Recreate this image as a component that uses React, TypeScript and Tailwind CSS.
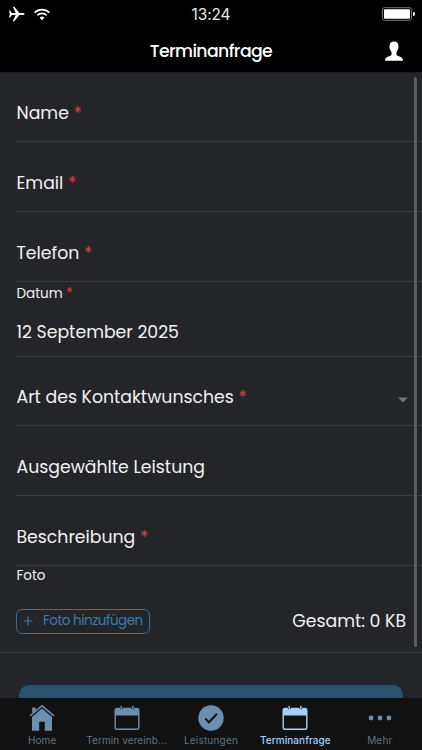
import type { ReactNode } from "react";

type FieldProps = {
  label: string;
  required?: boolean;
  className: string;
  children?: ReactNode;
};

function Required() {
  return <span className="text-[#d8434a]"> *</span>;
}

function Field({ label, required, className, children }: FieldProps) {
  return (
    <div className={`ml-4 flex shrink-0 items-end justify-between border-b border-[#3b3c40] pr-[14px] pb-[15px] pl-[0.5px] ${className}`}>
      <label className="text-[17.3px] leading-[26px] whitespace-pre">
        {label}
        {required && <Required />}
      </label>
      {children}
    </div>
  );
}

function CalendarIcon() {
  return (
    <svg width="26" height="26" viewBox="0 0 26 26" fill="none">
      <path
        d="M3 2.800h2.700a1.500 1.500 0 0 0 3 0h8.600a1.500 1.500 0 0 0 3 0H23a2.500 2.500 0 0 1 2.500 2.500v17.200A2.500 2.500 0 0 1 23 25H3a2.500 2.500 0 0 1-2.500-2.500V5.300A2.500 2.500 0 0 1 3 2.800Zm-1.100 7.700v11.800c0 .8.500 1.300 1.200 1.300h19.800c.7 0 1.200-.5 1.200-1.300V10.500H1.900Z"
        fill="currentColor"
        fillRule="evenodd"
      />
      <path d="M7.200 1.500v1.700M18.800 1.500v1.700" stroke="currentColor" strokeWidth="1.500" strokeLinecap="round" />
    </svg>
  );
}

function HomeIcon() {
  return (
    <svg width="26" height="26" viewBox="0 0 26 26" fill="none">
      <path d="M3.200 2.500h3.500v2.700L3.200 8V2.500ZM13 3.600l10 8.500v13.700h-7.200v-9h-5.600v9H3V12.100l10-8.500Z" fill="currentColor" />
      <path d="m1 10.800 12-10 12 10" stroke="currentColor" strokeWidth="1.500" />
    </svg>
  );
}

function CheckIcon() {
  return (
    <svg width="26" height="26" viewBox="0 0 26 26" fill="none">
      <circle cx="13" cy="13" r="12.700" fill="currentColor" />
      <path d="m7.200 13.500 3.800 3.800 8-8.500" stroke="#111112" strokeWidth="2" />
    </svg>
  );
}

function MoreIcon() {
  return (
    <svg width="26" height="26" viewBox="0 0 26 26" fill="currentColor">
      <circle cx="4" cy="13" r="2.400" />
      <circle cx="13" cy="13" r="2.400" />
      <circle cx="22" cy="13" r="2.400" />
    </svg>
  );
}

const tabs = [
  { label: "Home", icon: <HomeIcon />, tracking: "tracking-[0.15px]" },
  { label: "Termin vereinb...", icon: <CalendarIcon />, tracking: "tracking-[0.1px]" },
  { label: "Leistungen", icon: <CheckIcon />, tracking: "tracking-[0.2px]" },
  { label: "Terminanfrage", icon: <CalendarIcon />, tracking: "tracking-[0.05px]", active: true },
  { label: "Mehr", icon: <MoreIcon />, tracking: "tracking-[0.2px]" },
];

export default function App() {
  return (
    <div className="relative flex h-[750px] w-[422px] flex-col overflow-hidden bg-[#242529] font-['Poppins','Inter',sans-serif] text-[#f2f2f3]">
      {/* Status bar and title */}
      <header className="h-[73px] shrink-0 border-b border-[#1b1c1e] bg-black text-white">
        <div className="grid h-7 grid-cols-[1fr_auto_1fr] items-center px-2">
          <div className="flex items-center gap-[9px]">
            <svg width="17" height="16" viewBox="0 0 17 16" fill="white">
              <path d="M1 4.400h1.100l1.700 2.500h4L4.700.8h1.600l5.100 6.100h3.300c1.200 0 1.900.5 1.900 1.100s-.7 1.100-1.900 1.100h-3.300l-5.100 6.100H4.700l3.100-6.100h-4l-1.700 2.500H1L1.800 8 1 4.400Z" />
            </svg>
            <svg width="16" height="13" viewBox="0 0 16 13" fill="none" stroke="white" strokeWidth="1.600">
              <path d="M.7 4.600a10.500 10.500 0 0 1 14.600 0M3.300 7.300a6.700 6.700 0 0 1 9.400 0" />
              <path d="M5.600 9.700a3.400 3.400 0 0 1 4.800 0L8 12.200 5.600 9.700Z" fill="white" stroke="none" />
            </svg>
          </div>
          <span className="mt-px text-center font-['Inter',sans-serif] text-[15.400px] leading-5 tracking-[-0.100px] text-[#e8e8e8]">13:24</span>
          <svg className="-mr-[3px] justify-self-end" width="36" height="14" viewBox="0 0 36 14">
            <rect x="1.500" y=".700" width="29" height="12.600" rx="2" fill="black" stroke="#777" />
            <rect x="3" y="2.200" width="26" height="9.600" rx=".8" fill="white" />
            <path d="M32 5c1.300 0 2 .8 2 2s-.7 2-2 2V5Z" fill="white" />
          </svg>
        </div>
        <div className="grid h-[45px] grid-cols-[1fr_auto_1fr] items-center px-[18px]">
          <h1 className="col-start-2 text-[17.300px] leading-6 font-medium tracking-[-0.600px]">Terminanfrage</h1>
          <svg className="justify-self-end" width="20" height="20" viewBox="0 0 20 20" fill="white">
            <path d="M10 .5c3 0 4.500 1.700 4.400 4.500 0 .6.200.8.100 1.700-.1 1-.6 1.300-.8 2-.3 1.200-.9 1.800-1.200 2.400v3c1.500 1.500 5.900 1.400 6.500 4.900.1.500-.1.700-.5.700h-17c-.4 0-.6-.2-.5-.7.600-3.500 5-3.400 6.500-4.900v-3c-.3-.6-.9-1.200-1.200-2.400-.2-.7-.7-1-.8-2-.1-.9.100-1.100.1-1.700C5.500 2.200 7 .5 10 .5Z" />
          </svg>
        </div>
      </header>

      {/* Form */}
      <main className="flex flex-1 flex-col overflow-hidden">
        <Field label="Name" required className="h-[69px]" />
        <Field label="Email" required className="h-[70px]" />
        <Field label="Telefon" required className="h-[70px]" />
        <div className="ml-4 flex h-[75px] shrink-0 flex-col justify-between border-b border-[#3b3c40] pt-[2px] pb-[11px] pl-[0.5px]">
          <label className="text-[13.500px] leading-5">
            Datum<Required />
          </label>
          <span className="text-[17.300px] leading-[26px]">12 September 2025</span>
        </div>
        <Field label="Art des Kontaktwunsches" required className="h-[69px]">
          <svg className="mb-[7px]" width="10" height="6" viewBox="0 0 10 6" fill="#737477">
            <path d="M0 .5h10L5 5.500Z" />
          </svg>
        </Field>
        <Field label="Ausgewählte Leistung" className="h-[70px]" />
        <Field label="Beschreibung" required className="h-[70px]" />
        <div className="flex h-[87px] shrink-0 flex-col justify-between border-b border-[#3b3c40] px-4 pb-[18px]">
          <span className="pl-[0.5px] text-[13.500px] leading-5">Foto</span>
          <div className="flex items-center justify-between">
            <button className="flex h-[25px] w-[134px] items-center gap-[10px] rounded-md border border-[#326f9f] pl-[6px] text-[13.500px] text-[#397bae]">
              <svg width="10" height="10" viewBox="0 0 10 10" fill="none" stroke="currentColor" strokeWidth="1.200">
                <path d="M5 .5v9M.5 5h9" />
              </svg>
              <span className="mt-px tracking-[-0.500px] whitespace-nowrap">Foto hinzufügen</span>
            </button>
            <span className="text-[17.300px] leading-[26px]">Gesamt: 0 KB</span>
          </div>
        </div>
        <div className="mt-8 ml-[19px] h-11 w-[384px] shrink-0 rounded-[10px] bg-[#295271]" />
      </main>

      {/* Scroll indicator */}
      <div className="absolute top-[77px] left-[414px] h-[570px] w-[3px] rounded-full bg-[#5b5c60]" />

      <nav className="grid h-[52px] shrink-0 grid-cols-5 bg-[#111112] font-['Inter',sans-serif] text-[#6d8faf]">
        {tabs.map((tab) => (
          <div key={tab.label} className={`flex flex-col items-center pt-[7px] ${tab.active ? "text-[#a2d0fb]" : ""}`}>
            {tab.icon}
            <span className={`mt-[2px] text-[10px] leading-[14px] whitespace-nowrap ${tab.tracking} ${tab.active ? "font-medium" : "text-[#5f7589]"}`}>
              {tab.label}
            </span>
          </div>
        ))}
      </nav>
    </div>
  );
}
